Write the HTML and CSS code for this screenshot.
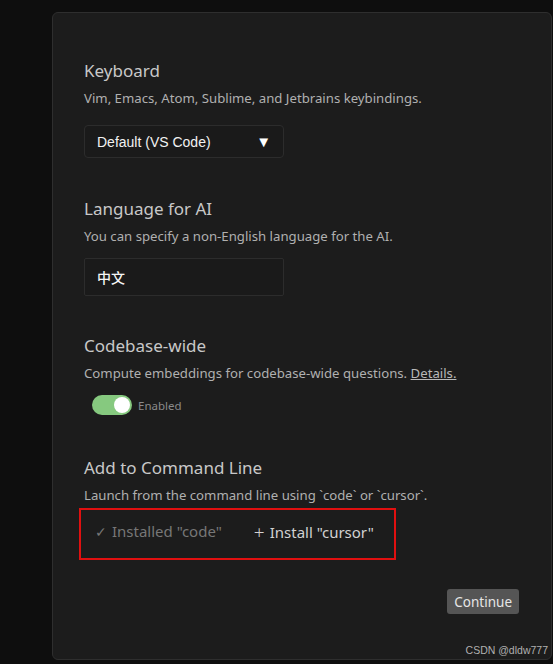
FILE: index.html
```html
<!DOCTYPE html>
<html>
   <head>
      <meta charset="UTF-8" />
      <title>Settings</title>
      <link rel="stylesheet" href="styles.css">
   </head>
   <body>
      <div class="panel">
         <div class="section">
            <h2>Keyboard</h2>
            <p class="desc">Vim, Emacs, Atom, Sublime, and Jetbrains keybindings.</p>
            <div class="select select-keys">
               <span>Default (VS Code)</span>
               <span class="arrow">&#9660;</span>
            </div>
         </div>
         <div class="section">
            <h2>Language for AI</h2>
            <p class="desc">You can specify a non-English language for the AI.</p>
            <div class="field">中文</div>
         </div>
         <div class="section">
            <h2>Codebase-wide</h2>
            <p class="desc">Compute embeddings for codebase-wide questions. <a href="#">Details.</a></p>
            <div class="toggle-row">
               <span class="toggle"><span class="knob"></span></span>
               <span class="toggle-label">Enabled</span>
            </div>
         </div>
         <div class="section">
            <h2>Add to Command Line</h2>
            <p class="desc">Launch from the command line using `code` or `cursor`.</p>
            <div class="mark">
               <span class="cmd done"><span class="sign">&#10003;</span>Installed "code"</span>
               <span class="cmd"><span class="sign plus">+</span>Install "cursor"</span>
            </div>
         </div>
         <div class="footer">
            <button>Continue</button>
         </div>
         <div class="watermark">CSDN @dldw777</div>
      </div>
   </body>
</html>
```

FILE: styles.css
```css
html, body { margin:0; padding:0; }
body { background:#0e0e0e; font-family:'Noto Sans','Open Sans',sans-serif; color:#c8c8c8; height:664px; overflow:hidden; }
.panel { position:relative; margin:12px 0 0 52px; width:500px; height:648px; background:#1c1c1c; border:1px solid #2e2e2e; border-radius:6px; padding:46px 0 0 31px; box-sizing:border-box; }
.section { margin-bottom:39px; }
h2 { margin:0; font-size:17px; font-weight:400; line-height:24px; color:#c8c8c8; }
.desc { margin:6px 0 0; font-size:13.2px; line-height:18px; color:#b0b0b0; }
.desc a { color:#b8b8b8; text-decoration:underline; }
.select { margin-top:18px; width:200px; height:33px; box-sizing:border-box; border:1px solid #2c2c2c; border-radius:4px; background:#1a1a1a; display:flex; align-items:center; justify-content:space-between; padding:0 12px 0 12px; font-family:'Liberation Sans',Arial,sans-serif; font-size:14px; color:#f2f2f2; }
.arrow { font-size:15px; color:#fff; }
.field { margin-top:13px; width:200px; height:38px; box-sizing:border-box; border:1px solid #2c2c2c; border-radius:2px; background:#1a1a1a; display:flex; align-items:center; padding-left:12px; font-family:'Noto Sans CJK SC',sans-serif; font-size:14px; font-weight:500; color:#f5f5f5; }
.section:nth-child(2) { margin-bottom:38px; }
.toggle-row { margin:13px 0 0 8px; display:flex; align-items:center; gap:6px; }
.toggle { width:40px; height:20px; border-radius:10px; background:#86c97f; display:flex; align-items:center; justify-content:flex-end; padding-right:2px; box-sizing:border-box; }
.knob { width:16px; height:16px; border-radius:50%; background:#fff; }
.toggle-label { font-size:11.5px; color:#8a8a8a; }
.section:nth-child(3) { margin-bottom:41px; }
.mark { margin:4px 0 0 -5px; width:317px; height:52px; box-sizing:border-box; border:2px solid #e01010; display:flex; align-items:center; padding:0 0 5px 14px; gap:32px; }
.cmd { font-size:15px; line-height:20px; color:#d2d2d2; display:flex; align-items:baseline; }
.cmd.done { color:#777; }
.sign { margin-right:5px; font-size:14px; }
.sign.plus { font-size:19px; font-weight:300; margin-right:5px; position:relative; top:1px; }
.section:nth-child(4) { margin-bottom:0; }
.footer { display:flex; justify-content:flex-end; margin:29px 32px 0 0; }
button { font-family:'Noto Sans',sans-serif; font-size:13.5px; color:#e6e6e6; background:#555; border:none; border-radius:3px; height:25px; padding:0 7px; }
.watermark { position:absolute; right:3px; bottom:3px; font-family:'Liberation Sans',Arial,sans-serif; font-size:10.5px; color:#b0b0b0; }
```
